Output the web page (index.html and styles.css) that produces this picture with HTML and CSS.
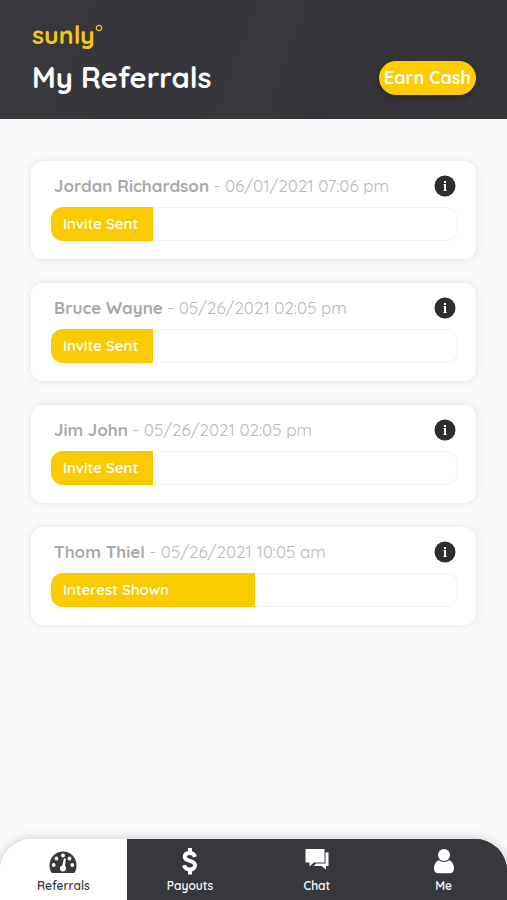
FILE: index.html
```html
<!DOCTYPE html>
<html lang="en">
<head>
<meta charset="utf-8">
<meta name="viewport" content="width=device-width, initial-scale=1">
<title>My Referrals</title>
<link rel="stylesheet" href="styles.css">
</head>
<body>
<header class="header">
  <a class="logo" href="#">sunly<svg class="logo-sun" viewBox="0 0 8 8" aria-hidden="true"><circle cx="4" cy="4" r="2.7"/></svg></a>
  <div class="title-row">
    <h1>My Referrals</h1>
    <button class="earn" type="button">Earn Cash</button>
  </div>
</header>
<main class="list">
  <article class="card">
    <div class="card-head">
      <p class="who"><strong>Jordan Richardson</strong> - 06/01/2021 07:06 pm</p>
      <button class="info" type="button" aria-label="Details"><svg viewBox="0 0 22 22"><circle cx="11" cy="11" r="10.5"/><path d="M10 6h2v2h-2zM9.500 9H12v6h.6v1H9.500v-1h.6v-5h-.6z"/></svg></button>
    </div>
    <div class="track"><div class="fill quarter">Invite Sent</div></div>
  </article>
  <article class="card">
    <div class="card-head">
      <p class="who"><strong>Bruce Wayne</strong> - 05/26/2021 02:05 pm</p>
      <button class="info" type="button" aria-label="Details"><svg viewBox="0 0 22 22"><circle cx="11" cy="11" r="10.5"/><path d="M10 6h2v2h-2zM9.500 9H12v6h.6v1H9.500v-1h.6v-5h-.6z"/></svg></button>
    </div>
    <div class="track"><div class="fill quarter">Invite Sent</div></div>
  </article>
  <article class="card">
    <div class="card-head">
      <p class="who"><strong>Jim John</strong> - 05/26/2021 02:05 pm</p>
      <button class="info" type="button" aria-label="Details"><svg viewBox="0 0 22 22"><circle cx="11" cy="11" r="10.5"/><path d="M10 6h2v2h-2zM9.500 9H12v6h.6v1H9.500v-1h.6v-5h-.6z"/></svg></button>
    </div>
    <div class="track"><div class="fill quarter">Invite Sent</div></div>
  </article>
  <article class="card">
    <div class="card-head">
      <p class="who"><strong>Thom Thiel</strong> - 05/26/2021 10:05 am</p>
      <button class="info" type="button" aria-label="Details"><svg viewBox="0 0 22 22"><circle cx="11" cy="11" r="10.5"/><path d="M10 6h2v2h-2zM9.500 9H12v6h.6v1H9.500v-1h.6v-5h-.6z"/></svg></button>
    </div>
    <div class="track"><div class="fill half">Interest Shown</div></div>
  </article>
</main>
<nav class="tabs">
  <a class="tab active" href="#" aria-current="page">
    <svg viewBox="0 0 28 28"><path d="M2.800 26C1.300 24 .5 21.300.5 18.500.5 10.500 6.500 4.500 14 4.500S27.500 10.500 27.500 18.500c0 2.800-.8 5.500-2.300 7.500z"/><g class="cut"><circle cx="4.700" cy="18" r="1.900"/><circle cx="7.500" cy="11.500" r="1.900"/><circle cx="14" cy="8.500" r="1.900"/><circle cx="20.500" cy="11.500" r="1.900"/><circle cx="23.300" cy="18" r="1.900"/><circle cx="14" cy="21.500" r="3"/><path d="M12.800 20l2-8c.3-1.300 2.200-.9 2 .4L15.800 20.500z"/></g></svg>
    <span>Referrals</span>
  </a>
  <a class="tab" href="#">
    <svg viewBox="0 0 28 28"><path class="line" d="M19 9.800C18.200 7.300 16.300 6 13.500 6c-3 0-4.700 1.400-4.700 3.700 0 5.600 10.200 2.600 10.200 8.600 0 2.700-2.200 4.200-5.200 4.200-3 0-5-1.300-5.800-4.200M14 1v5M14 22.500v5"/></svg>
    <span>Payouts</span>
  </a>
  <a class="tab" href="#">
    <svg viewBox="0 0 28 28"><path d="M2.500 2h19v13.500h-10.500l-4.500 4v-4h-4z"/><path d="M22.500 5.500h3v13.500h-2.500v3.500L18.500 19h-8l2.500-2.500h9.500z"/></svg>
    <span>Chat</span>
  </a>
  <a class="tab" href="#">
    <svg viewBox="0 0 28 28"><circle cx="14" cy="8" r="6"/><path d="M9 13.200C5.700 14.200 4 17.700 4 21.700c0 2.700 1.500 4.500 4 4.500h12c2.500 0 4-1.800 4-4.500 0-4-1.700-7.500-5-8.500-3 2.300-7 2.300-10 0z"/></svg>
    <span>Me</span>
  </a>
</nav>
</body>
</html>
```
FILE: styles.css
```css
* { box-sizing: border-box; }

body {
  margin: 0;
  min-height: 100vh;
  display: flex;
  flex-direction: column;
  background: #fafafa;
  font-family: Quicksand, Lato, sans-serif;
}

h1, p { margin: 0; }

button {
  border: 0;
  padding: 0;
  font-family: inherit;
  cursor: pointer;
}

a { text-decoration: none; }

.header {
  padding: 21px 31px 24px 32px;
  background: linear-gradient(110deg, #38393e, #35343a 40%, #38393d 52%, #343339 64%, #37363b);
  color: #fff;
}

.logo {
  display: flex;
  align-items: flex-start;
  width: max-content;
  color: #f5c715;
  font-size: 25px;
  line-height: 28px;
  font-weight: 700;
}

.logo-sun {
  width: 8px;
  height: 8px;
  margin-top: 3px;
  fill: none;
  stroke: #f5c715;
  stroke-width: 1.2;
}

.title-row {
  display: flex;
  align-items: center;
  justify-content: space-between;
  margin-top: 11px;
}

h1 {
  font-size: 29px;
  line-height: 35px;
  font-weight: 700;
}

.earn {
  height: 34px;
  padding: 0 5px;
  border-radius: 17px;
  background: #fc0;
  color: #fff;
  font-size: 18px;
  font-weight: 700;
  box-shadow: 0 3px 8px rgba(0, 0, 0, 0.3);
}

.list {
  flex: 1;
  display: flex;
  flex-direction: column;
  gap: 24px;
  padding: 42px 31px 24px;
}

.card {
  padding: 14px 18px 18px 20px;
  border-radius: 12px;
  background: #fff;
  box-shadow: 0 0 8px rgba(0, 0, 0, 0.1);
}

.card-head {
  display: flex;
  align-items: center;
  justify-content: space-between;
  padding: 0 2px 0 3px;
}

.who {
  color: #b8b8b8;
  font-size: 17px;
  line-height: 22px;
  font-weight: 400;
}

.who strong {
  color: #a9a9a9;
  font-weight: 700;
}

.info {
  width: 22px;
  height: 22px;
  background: none;
}

.info svg { display: block; }
.info circle { fill: #2e2e30; }
.info path { fill: #fff; }

.track {
  height: 34px;
  margin-top: 10px;
  border-radius: 12px;
  overflow: hidden;
  box-shadow: inset 0 0 0 1px #f3f3f3;
}

.fill {
  height: 100%;
  padding-left: 12px;
  background: #facb00;
  color: #fff;
  font-size: 15px;
  line-height: 34px;
  font-weight: 600;
}

.quarter { width: 25%; }
.half { width: 50%; }

.tabs {
  position: sticky;
  bottom: 0;
  display: grid;
  grid-template-columns: repeat(4, 1fr);
  border-radius: 32px 32px 0 0;
  overflow: hidden;
  background: linear-gradient(90deg, #fff 20%, #37383d 20%);
  box-shadow: 0 0 12px rgba(0, 0, 0, 0.2);
}

.tab {
  display: flex;
  flex-direction: column;
  align-items: center;
  gap: 3px;
  padding: 8px 0 6px;
  background: #37383d;
  color: #fff;
  font-size: 12px;
  line-height: 16px;
  font-weight: 600;
}

.tab svg {
  width: 28px;
  height: 28px;
  fill: currentColor;
}

.tab .line {
  fill: none;
  stroke: currentColor;
  stroke-width: 4;
}

.tab.active {
  background: #fff;
  color: #37383d;
}

.cut { fill: #fff; }
```
